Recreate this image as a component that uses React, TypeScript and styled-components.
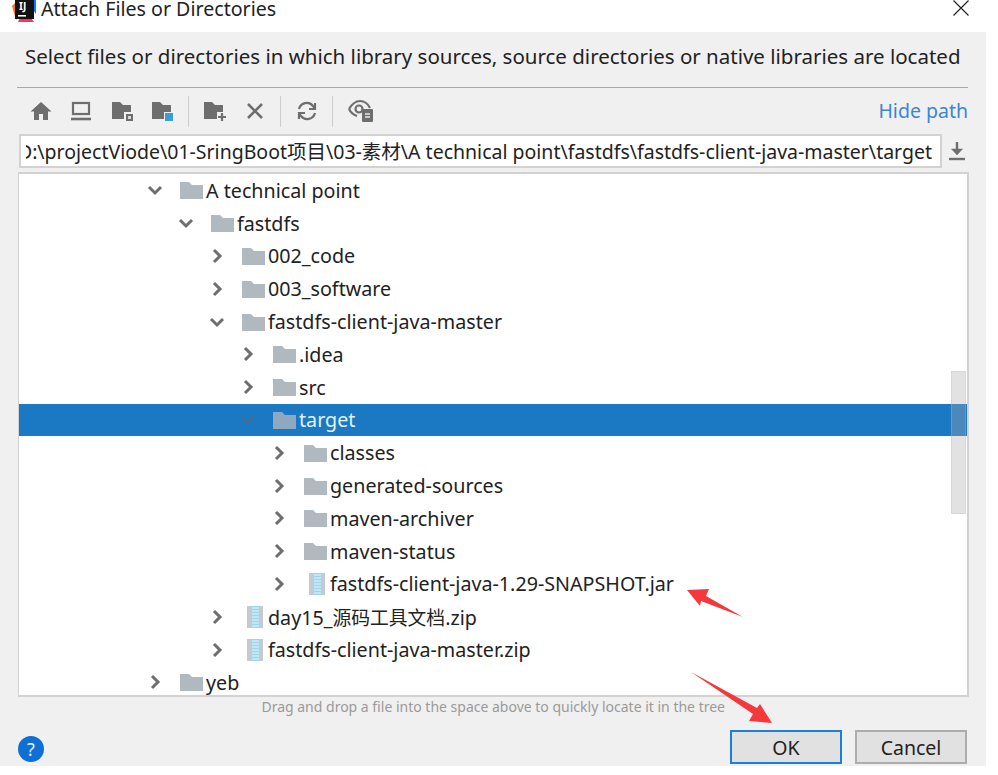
import React from 'react';
import styled, {createGlobalStyle} from "styled-components";

const FONT = `"Noto Sans", "Noto Sans CJK SC", sans-serif`

type TreeRowType = {
    level: number
    name: string
    kind?: "folder" | "zip"
    open?: boolean
    selected?: boolean
}

const rows: Array<TreeRowType> = [
    {level: 0, name: "A technical point", open: true},
    {level: 1, name: "fastdfs", open: true},
    {level: 2, name: "002_code"},
    {level: 2, name: "003_software"},
    {level: 2, name: "fastdfs-client-java-master", open: true},
    {level: 3, name: ".idea"},
    {level: 3, name: "src"},
    {level: 3, name: "target", open: true, selected: true},
    {level: 4, name: "classes"},
    {level: 4, name: "generated-sources"},
    {level: 4, name: "maven-archiver"},
    {level: 4, name: "maven-status"},
    {level: 4, name: "fastdfs-client-java-1.29-SNAPSHOT.jar", kind: "zip"},
    {level: 2, name: "day15_源码工具文档.zip", kind: "zip"},
    {level: 2, name: "fastdfs-client-java-master.zip", kind: "zip"},
    {level: 0, name: "yeb"},
]

function Chevron({open, selected}: { open?: boolean, selected?: boolean }) {
    return (
        <ChevronBox>
            <svg width="16" height="16" viewBox="0 0 16 16" fill="none"
                 stroke={selected ? "#3f6f96" : "#6e6e6e"} strokeWidth="3">
                {open ? <path d="M2 5l6 6 6-6"/> : <path d="M5 2l6 6-6 6"/>}
            </svg>
        </ChevronBox>
    )
}

function FolderIcon({selected}: { selected?: boolean }) {
    return (
        <svg width="23" height="18" viewBox="0 0 23 18">
            <path d="M0 1h9l3 3h11v14H0z" fill={selected ? "#8ea8bf" : "#b0b9c0"}/>
        </svg>
    )
}

function ZipIcon() {
    return (
        <svg width="16" height="22" viewBox="0 0 16 22">
            <rect x="0" y="0" width="16" height="22" fill="#c3cbd1"/>
            <rect x="5" y="0" width="7" height="22" fill="#9fd6ee"/>
            <path d="M5 2h7M5 5h7M5 8h7M5 11h7M5 14h7M5 17h7M5 20h7" stroke="#e3f3fa" strokeWidth="1.2"/>
        </svg>
    )
}

function TreeLine({row}: { row: TreeRowType }) {
    // the chinese glyphs run a bit narrower than the latin ones here
    const parts = row.name.split(/([\u4e00-\u9fff]+)/)

    return (
        <Row $level={row.level} $selected={row.selected}>
            <Chevron open={row.open} selected={row.selected}/>
            <IconBox $zip={row.kind === "zip"}>
                {row.kind === "zip" ? <ZipIcon/> : <FolderIcon selected={row.selected}/>}
            </IconBox>
            <RowName $selected={row.selected}>
                {parts.map((part, i) => i % 2 ? <CjkPart key={i}>{part}</CjkPart> : part)}
            </RowName>
        </Row>
    )
}

function Toolbar() {
    return (
        <ToolbarRow>
            <ToolIcons>
                <ToolButton>
                    <svg width="22" height="20" viewBox="0 0 22 20" fill="#6e6e6e">
                        <path d="M11 1L0.5 10.5H4V19h5v-6h4v6h5v-8.500h3.500z"/>
                    </svg>
                </ToolButton>
                <ToolButton>
                    <svg width="20" height="20" viewBox="0 0 20 20" fill="none" stroke="#6e6e6e">
                        <rect x="2" y="2" width="16" height="11" strokeWidth="2.200"/>
                        <path d="M0 18h20" strokeWidth="2.600"/>
                    </svg>
                </ToolButton>
                <ToolButton $offset={2}>
                    <svg width="22" height="22" viewBox="0 0 22 22">
                        <path d="M0 2h8l3 3h8v7h-7v7H0z" fill="#6e6e6e"/>
                        <rect x="14" y="14" width="7" height="7" fill="#6e6e6e"/>
                        <rect x="16" y="16" width="3" height="3" fill="#d8d8d8"/>
                    </svg>
                </ToolButton>
                <ToolButton>
                    <svg width="22" height="22" viewBox="0 0 22 22">
                        <path d="M0 2h8l3 3h8v7h-7v7H0z" fill="#6e6e6e"/>
                        <rect x="13" y="13" width="8" height="8" fill="#389fd6"/>
                    </svg>
                </ToolButton>
                <ToolDivider/>
                <ToolButton>
                    <svg width="23" height="22" viewBox="0 0 23 22">
                        <path d="M0 2h8l3 3h8v7h-6v7H0z" fill="#6e6e6e"/>
                        <path d="M14 17h8M18 13v8" stroke="#6e6e6e" strokeWidth="2.200"/>
                    </svg>
                </ToolButton>
                <ToolButton>
                    <svg width="16" height="16" viewBox="0 0 16 16" stroke="#6e6e6e" strokeWidth="2.600">
                        <path d="M1 1l14 14M15 1L1 15"/>
                    </svg>
                </ToolButton>
                <ToolDivider/>
                <ToolButton>
                    <svg width="20" height="20" viewBox="0 0 20 20" fill="none" stroke="#6e6e6e" strokeWidth="2.200">
                        <path d="M2 8a8 8 0 0 1 14-3l2 3M18 12a8 8 0 0 1-14 3l-2-3"/>
                        <path d="M18 2v6h-6M2 18v-6h6"/>
                    </svg>
                </ToolButton>
                <ToolDivider/>
                <ToolButton $offset={2}>
                    <svg width="26" height="24" viewBox="0 0 26 24" fill="none">
                        <path d="M1 10c3-5 7-8 11-8s8 3 10 7" stroke="#6e6e6e" strokeWidth="2.200"/>
                        <path d="M1 10c2 4 5 6 8 7" stroke="#6e6e6e" strokeWidth="2.200"/>
                        <circle cx="11" cy="10" r="3.500" stroke="#6e6e6e" strokeWidth="2.200"/>
                        <rect x="14" y="10" width="11" height="13" rx="1" fill="#6e6e6e"/>
                        <path d="M17 15h5M17 18h5" stroke="#e8e8e8" strokeWidth="1.400"/>
                    </svg>
                </ToolButton>
            </ToolIcons>
            <HidePath>Hide path</HidePath>
        </ToolbarRow>
    )
}

export default function App() {
    return (
        <>
            <GlobalStyle/>
            <Dialog>
                <TitleBar>
                    <AppLogo>
                        <svg width="24" height="22" viewBox="0 0 24 22">
                            <path d="M0 6l6-6h6v10L4 20z" fill="#f97a12"/>
                            <path d="M6 22l6-14 10 14z" fill="#fe315d"/>
                            <path d="M14 0h10v14z" fill="#087cfa"/>
                            <rect x="3" y="0" width="19" height="19" fill="#111"/>
                            <rect x="6" y="15" width="8" height="1.600" fill="#fff"/>
                        </svg>
                        <LogoLetters>IJ</LogoLetters>
                    </AppLogo>
                    <Title>Attach Files or Directories</Title>
                    <CloseIcon>
                        <svg width="16" height="16" viewBox="0 0 16 16" stroke="#222" strokeWidth="1.200">
                            <path d="M0.500 0.500l15 15M15.500 0.500l-15 15"/>
                        </svg>
                    </CloseIcon>
                </TitleBar>
                <Body>
                    <Description>Select files or directories in which library sources, source directories or native libraries are located</Description>
                    <Separator/>
                    <Toolbar/>
                    <PathRow>
                        <PathInput>
                            <PathClip>
                                <PathText>D:\projectViode\01-SringBoot项目\03-素材\A technical point\fastdfs\fastdfs-client-java-master\target</PathText>
                            </PathClip>
                        </PathInput>
                        <DownloadIcon>
                            <svg width="18" height="20" viewBox="0 0 18 20" fill="none" stroke="#6e6e6e">
                                <path d="M9 1v11" strokeWidth="2.400"/>
                                <path d="M3.500 8L9 14l5.500-6z" fill="#6e6e6e" strokeWidth="0.500"/>
                                <path d="M1 18h16" strokeWidth="2.400"/>
                            </svg>
                        </DownloadIcon>
                    </PathRow>
                    <Tree>
                        {rows.map(row => <TreeLine key={row.name} row={row}/>)}
                        <ScrollThumb/>
                    </Tree>
                    <Hint>Drag and drop a file into the space above to quickly locate it in the tree</Hint>
                    <Footer>
                        <HelpButton>?</HelpButton>
                        <Buttons>
                            <DialogButton $primary>OK</DialogButton>
                            <DialogButton>Cancel</DialogButton>
                        </Buttons>
                    </Footer>
                </Body>
                <Arrows width="998" height="775" viewBox="0 0 998 775">
                    <path d="M687 590L709 589L706 596L743 617L701 601L700 606z" fill="#f5383b"/>
                    <path d="M691 672L757 708L760 704L772 723L749 721L753 714z" fill="#f5383b"/>
                </Arrows>
            </Dialog>
        </>
    )
}

const GlobalStyle = createGlobalStyle`
    html, body {
        margin: 0;
        padding: 0;
        background: #fff;
    }
    * {
        box-sizing: border-box;
    }
`

const Dialog = styled.div`
    position: relative;
    width: 986px;
    height: 766px;
    display: flex;
    flex-direction: column;
    font-family: ${FONT};
    overflow: visible;
`

const TitleBar = styled.div`
    height: 32px;
    background: #fff;
    position: relative;
    overflow: hidden;
    display: flex;
    align-items: flex-start;
    padding-left: 12px;
`

const AppLogo = styled.div`
    position: relative;
    width: 24px;
    height: 22px;
    margin-right: 5px;
`

const LogoLetters = styled.span`
    position: absolute;
    left: 7px;
    top: 0;
    font-size: 10px;
    line-height: 13px;
    font-weight: 700;
    color: #fff;
`

const Title = styled.div`
    font-size: 19.6px;
    line-height: 18px;
    color: #222;
    white-space: nowrap;
`

const CloseIcon = styled.div`
    position: absolute;
    left: 953px;
    top: 0;
    line-height: 0;
`

const Body = styled.div`
    flex: 1;
    background: #f0f0f0;
    padding: 0 18px 0 18px;
    display: flex;
    flex-direction: column;
`

const Description = styled.div`
    margin: 12px 0 0 7px;
    font-size: 20.5px;
    line-height: 25px;
    height: 25px;
    white-space: nowrap;
    color: #222;
`

const Separator = styled.div`
    height: 1px;
    margin-top: 18px;
    background: #a9a9a9;
    width: 951px;
    margin-left: -1px;
`

const ToolbarRow = styled.div`
    height: 46px;
    display: flex;
    align-items: center;
    justify-content: space-between;
    width: 950px;
`

const ToolIcons = styled.div`
    display: flex;
    align-items: center;
    padding-left: 3px;
`

const ToolButton = styled.div<{ $offset?: number }>`
    width: 40px;
    height: 30px;
    margin-left: ${props => props.$offset || 0}px;
    display: flex;
    align-items: center;
    justify-content: center;
`

const ToolDivider = styled.div`
    width: 1px;
    height: 31px;
    background: #cdcdcd;
    margin: 0 6px 0 5px;
`

const HidePath = styled.div`
    font-size: 19.5px;
    color: #3a87d4;
    white-space: nowrap;
    margin-bottom: 1px;
`

const PathRow = styled.div`
    display: flex;
    align-items: center;
    height: 34px;
    width: 950px;
    margin-left: 1px;
`

const PathInput = styled.div`
    width: 923px;
    height: 34px;
    background: #fff;
    border: 2px solid #d2d2d2;
    display: flex;
    align-items: center;
    padding: 0 8px 2px 5px;
`

const PathClip = styled.div`
    flex: 1;
    min-width: 0;
    display: flex;
    justify-content: flex-end;
    overflow: hidden;
`

const PathText = styled.div`
    font-size: 19.5px;
    color: #222;
    white-space: nowrap;
    flex-shrink: 0;
`

const DownloadIcon = styled.div`
    margin-left: 6px;
    line-height: 0;
`

const Tree = styled.div`
    position: relative;
    margin-top: 4px;
    width: 951px;
    height: 525px;
    background: #fff;
    border: 2px solid #d2d2d2;
    border-left-width: 1px;
    overflow: hidden;
`

const Row = styled.div<{ $level: number, $selected?: boolean }>`
    height: 32.8px;
    display: flex;
    align-items: center;
    padding-left: ${props => 128 + props.$level * 31}px;
    background: ${props => props.$selected ? "#1a79c2" : "transparent"};
`

const ChevronBox = styled.div`
    width: 16px;
    height: 16px;
    margin-right: 17px;
    line-height: 0;
`

const IconBox = styled.div<{ $zip?: boolean }>`
    width: 23px;
    display: flex;
    justify-content: center;
    margin-right: 3px;
    padding-left: ${props => props.$zip ? "3px" : "0"};
    line-height: 0;
`

const RowName = styled.span<{ $selected?: boolean }>`
    font-size: 19.7px;
    color: ${props => props.$selected ? "#e6f0f8" : "#222"};
    white-space: nowrap;
`

const CjkPart = styled.span`
    font-size: 18.8px;
`

const ScrollThumb = styled.div`
    position: absolute;
    top: 197px;
    right: 1px;
    width: 15px;
    height: 143px;
    background: rgba(170, 170, 170, 0.34);
    border: 1px solid rgba(190, 190, 190, 0.3);
`

const Hint = styled.div`
    font-size: 14px;
    line-height: 18px;
    margin-top: 1px;
    color: #9a9a9a;
    text-align: right;
    width: 707px;
    white-space: nowrap;
`

const Footer = styled.div`
    display: flex;
    align-items: center;
    justify-content: space-between;
    width: 949px;
    margin-top: 14px;
    height: 34px;
`

const HelpButton = styled.div`
    width: 26px;
    height: 26px;
    border-radius: 50%;
    background: #0f6fd4;
    color: #e6effa;
    font-size: 18px;
    display: flex;
    align-items: center;
    justify-content: center;
    margin-top: 4px;
`

const Buttons = styled.div`
    display: flex;
    gap: 13px;
`

const DialogButton = styled.div<{ $primary?: boolean }>`
    width: 112px;
    height: 34px;
    display: flex;
    align-items: center;
    justify-content: center;
    font-size: 19.5px;
    color: #222;
    background: #e1e1e1;
    border: 2px solid ${props => props.$primary ? "#1b80d8" : "#adadad"};
`

const Arrows = styled.svg`
    position: absolute;
    left: 0;
    top: 0;
    pointer-events: none;
`
